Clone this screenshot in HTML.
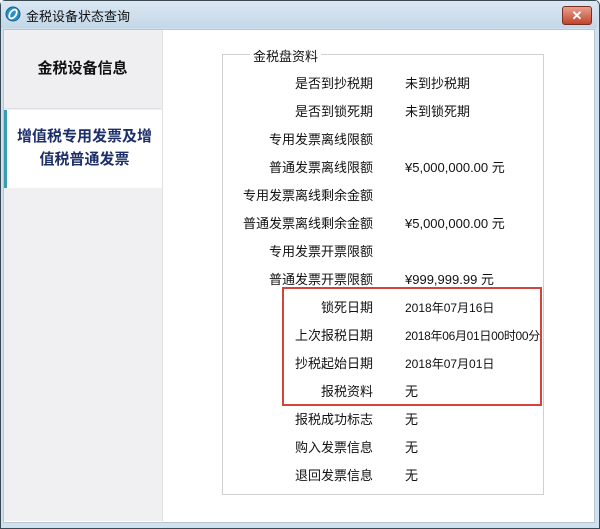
<!DOCTYPE html>
<html><head><meta charset="utf-8"><style>
body{margin:0;width:600px;height:529px;overflow:hidden;background:#fff;font-family:"Liberation Sans","Noto Sans CJK SC",sans-serif;font-size:13px;color:#111;position:relative}
.abs{position:absolute}
.win{left:0;top:0;width:598px;height:527px;border:1px solid #3a4a55;border-radius:5px 5px 0 0;background:#cfe0ee}
.title{left:1px;top:1px;width:596px;height:27px;background:linear-gradient(#dbe8f3,#c4d7e8)}
.client{left:3px;top:29px;width:590px;height:492px;background:#fff;border:1px solid #b8c6d0}
.lab{width:150px;text-align:right;left:223px}
.val{left:405px}
.d{font-size:12px;margin-top:2px}
</style></head><body>
<div class="abs win"></div>
<div class="abs title"></div>
<svg class="abs" style="left:5px;top:6px" width="16" height="16"><circle cx="8" cy="8" r="7" fill="#2a8fc4" stroke="#1a5f88"/><ellipse cx="8" cy="8" rx="3" ry="5" fill="none" stroke="#fff" stroke-width="1.8" transform="rotate(35 8 8)"/></svg>
<div class="abs" style="left:26px;top:6px;font-size:13px">金税设备状态查询</div>
<div class="abs" style="left:562px;top:6px;width:28px;height:17px;border-radius:3px;background:linear-gradient(#e8a090,#c0452c);border:1px solid #7a3020;color:#fff;font-weight:bold;text-align:center;line-height:17px;font-size:13px">✕</div>
<div class="abs client"></div>
<div class="abs" style="left:4px;top:30px;width:158px;height:491px;background:#f0eff1;border-right:1px solid #e0e0e0"></div>
<div class="abs" style="left:4px;top:32px;width:157px;height:76px;background:#efeef0;border-bottom:1px solid #e0e0e4;text-align:center;line-height:74px;font-weight:bold;font-size:15px">金税设备信息</div>
<div class="abs" style="left:4px;top:110px;width:158px;height:78px;background:#fff;border-left:3px solid #3c9ab0;box-sizing:border-box;text-align:center;font-weight:bold;font-size:15px;color:#1c2f6a;line-height:23px;padding-top:15px">增值税专用发票及增<br>值税普通发票</div>
<div class="abs" style="left:222px;top:54px;width:320px;height:439px;border:1px solid #d0d0d0"></div>
<div class="abs" style="left:250px;top:46px;background:#fff;padding:0 3px">金税盘资料</div>
<div class="abs" style="left:282px;top:287px;width:256px;height:115px;border:2px solid #d0463f"></div>
<div class="abs lab" style="top:73px">是否到抄税期</div><div class="abs val" style="top:73px">未到抄税期</div>
<div class="abs lab" style="top:101px">是否到锁死期</div><div class="abs val" style="top:101px">未到锁死期</div>
<div class="abs lab" style="top:129px">专用发票离线限额</div>
<div class="abs lab" style="top:157px">普通发票离线限额</div><div class="abs val" style="top:157px">¥5,000,000.00 元</div>
<div class="abs lab" style="top:185px;left:203px;width:170px">专用发票离线剩余金额</div>
<div class="abs lab" style="top:213px;left:203px;width:170px">普通发票离线剩余金额</div><div class="abs val" style="top:213px">¥5,000,000.00 元</div>
<div class="abs lab" style="top:241px">专用发票开票限额</div>
<div class="abs lab" style="top:269px">普通发票开票限额</div><div class="abs val" style="top:269px">¥999,999.99 元</div>
<div class="abs lab" style="top:297px">锁死日期</div><div class="abs val d" style="top:297px">2018年07月16日</div>
<div class="abs lab" style="top:325px">上次报税日期</div><div class="abs val d" style="top:325px;letter-spacing:-0.3px">2018年06月01日00时00分</div>
<div class="abs lab" style="top:353px">抄税起始日期</div><div class="abs val d" style="top:353px">2018年07月01日</div>
<div class="abs lab" style="top:381px">报税资料</div><div class="abs val" style="top:381px">无</div>
<div class="abs lab" style="top:409px">报税成功标志</div><div class="abs val" style="top:409px">无</div>
<div class="abs lab" style="top:437px">购入发票信息</div><div class="abs val" style="top:437px">无</div>
<div class="abs lab" style="top:465px">退回发票信息</div><div class="abs val" style="top:465px">无</div>
</body></html>
